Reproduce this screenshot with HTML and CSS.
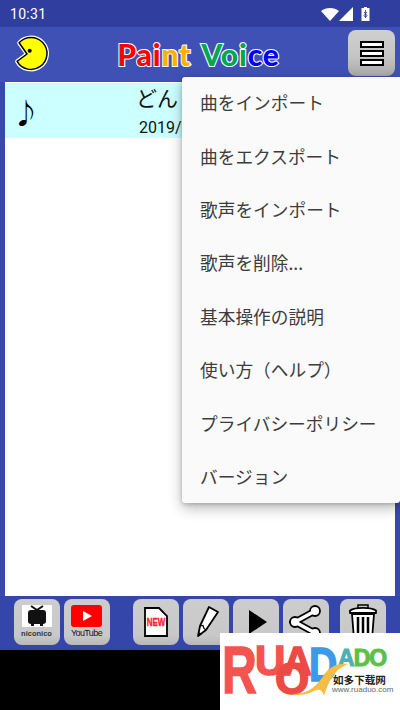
FILE: index.html
```html
<!DOCTYPE html>
<html lang="ja">
<head>
<meta charset="utf-8">
<title>Paint Voice</title>
<link rel="stylesheet" href="styles.css">
</head>
<body>
<div class="app">
  <header class="status">
    <span class="time">10:31</span>
    <span class="status-icons">
      <svg width="18" height="13" viewBox="0 0 18 13"><path d="M0 3C5-1 13-1 18 3L9 13Z" fill="#fff"/></svg>
      <svg width="14" height="14" viewBox="0 0 14 14"><path d="M14 0V14H0Z" fill="#fff"/></svg>
      <svg class="battery" width="9" height="14" viewBox="0 0 9 14"><path d="M3 0H6V1H8.500V14H.5V1H3Z" fill="#fff"/><path d="M4.500 3V11M3 5L6 8.500L4.500 10.500M6 5L3 8.500L4.500 10.500" stroke="#303f9f" stroke-width=".9" fill="none"/></svg>
    </span>
  </header>
  <div class="appbar">
    <svg class="pac" width="38" height="38" viewBox="0 0 38 38">
      <path d="M7.100 7.800A16 16 0 1 1 5.100 26.400L15 19Z" fill="#ffff00" stroke="#fff" stroke-width="4" stroke-linejoin="round"/>
      <path d="M7.100 7.800A16 16 0 1 1 5.100 26.400L15 19Z" fill="#ffff00" stroke="#000" stroke-width="1.500" stroke-linejoin="round"/>
      <circle cx="17.700" cy="15.700" r="2" fill="#000"/>
    </svg>
    <h1 class="title"><span class="red">Pai</span><span class="orange">nt</span> <span class="green">Voi</span><span class="blue">ce</span></h1>
    <button class="btn menu-btn" type="button" aria-label="メニュー">
      <span class="bar"></span><span class="bar"></span><span class="bar"></span>
    </button>
  </div>
  <main class="list">
    <div class="row">
      <span class="note">♪</span>
      <div class="row-text">
        <div class="song">どん</div>
        <div class="date">2019/01/01 1:00</div>
      </div>
    </div>
  </main>
  <footer class="toolbar">
    <div class="group">
      <button class="btn tool" type="button">
        <svg class="nico" width="30" height="22" viewBox="0 0 30 22"><rect width="30" height="22" rx="1" fill="#fff"/><path d="M9 1L15 5L21 1" stroke="#111" stroke-width="2" fill="none"/><rect x="6" y="5" width="18" height="14" rx="3" fill="#111"/><rect x="9" y="18" width="3" height="3" fill="#111"/><rect x="18" y="18" width="3" height="3" fill="#111"/></svg>
        <span class="tool-label nico-label">niconico</span>
      </button>
      <button class="btn tool" type="button">
        <svg width="31" height="22" viewBox="0 0 31 22"><rect width="31" height="22" rx="3" fill="#ff0000"/><path d="M12 6V16L21 11Z" fill="#fff"/></svg>
        <span class="tool-label">YouTube</span>
      </button>
    </div>
    <div class="group">
      <button class="btn tool" type="button">
        <span class="doc">
          <svg width="24" height="30" viewBox="0 0 24 30"><path d="M1 1H15L23 9V29H1Z" fill="#fff" stroke="#000" stroke-width="1.800"/></svg>
          <span class="new">NEW</span>
        </span>
      </button>
      <button class="btn tool" type="button">
        <svg width="34" height="34" viewBox="0 0 34 34"><path d="M20 2L29 7L17 25L9 31L11 21Z" fill="#fff" stroke="#000" stroke-width="1.800" stroke-linejoin="round"/><path d="M11 21L14 20.500L15 23.500L17 25" fill="none" stroke="#000" stroke-width="1.200"/><path d="M10.300 27.300L13 29L9 31.500Z" fill="#000"/></svg>
      </button>
      <button class="btn tool" type="button">
        <svg class="play" width="18" height="24" viewBox="0 0 18 24"><path d="M0 0V24L18 12Z" fill="#000"/></svg>
      </button>
      <button class="btn tool" type="button">
        <svg width="34" height="34" viewBox="0 0 34 34"><path d="M26 6L6 17L26 28" fill="none" stroke="#000" stroke-width="7"/><circle cx="26" cy="6" r="5" fill="#fff" stroke="#000" stroke-width="1.800"/><circle cx="6" cy="17" r="5" fill="#fff" stroke="#000" stroke-width="1.800"/><circle cx="26" cy="28" r="5" fill="#fff" stroke="#000" stroke-width="1.800"/><path d="M26 6L6 17L26 28" fill="none" stroke="#fff" stroke-width="3.500"/></svg>
      </button>
      <button class="btn tool trash" type="button">
        <svg width="28" height="36" viewBox="0 0 28 36"><path d="M9 4V1H19V4" fill="none" stroke="#000" stroke-width="1.500"/><path d="M1 9V6.500C6 3 22 3 27 6.500V9Z" fill="#fff" stroke="#000" stroke-width="1.800" stroke-linejoin="round"/><path d="M3 10H25L23 35H5Z" fill="#fff" stroke="#000" stroke-width="1.800" stroke-linejoin="round"/><path d="M9 13V32M14 13V32M19 13V32" stroke="#000" stroke-width="2.500"/></svg>
      </button>
    </div>
  </footer>
  <div class="black"></div>

  <nav class="menu">
    <a class="menu-item">曲をインポート</a>
    <a class="menu-item">曲をエクスポート</a>
    <a class="menu-item">歌声をインポート</a>
    <a class="menu-item">歌声を削除...</a>
    <a class="menu-item">基本操作の説明</a>
    <a class="menu-item">使い方（ヘルプ）</a>
    <a class="menu-item">プライバシーポリシー</a>
    <a class="menu-item">バージョン</a>
  </nav>

  <aside class="watermark">
    <span class="wm wm-r">R</span>
    <span class="wm wm-u">U</span>
    <span class="wm wm-a">A</span>
    <span class="wm wm-o">O</span>
    <span class="wm wm-d">D</span>
    <span class="wm wm-ado"><span class="wm-teal">A</span>DO</span>
    <svg class="wm-swoosh" width="56" height="34" viewBox="0 0 56 34"><path d="M0 31C16 31 24 24 32 12C38 3 46 0 56 1C44 6 38 14 32 33C30 26 26 26 22 28C14 32 6 33 0 31Z" fill="#f5bd45"/></svg>
    <span class="wm-cn">如多下载网</span>
    <span class="wm-url">www.ruaduo.com</span>
  </aside>
</div>
</body>
</html>
```

FILE: styles.css
```css
* { box-sizing: border-box; }
html, body { margin: 0; padding: 0; }
body { width: 400px; height: 710px; overflow: hidden; background: #000; font-family: "Roboto", "Noto Sans CJK JP", sans-serif; }

.app { position: relative; width: 400px; height: 710px; display: flex; flex-direction: column; overflow: hidden; background: #3949ab; }

.status { height: 27px; flex: none; background: #303f9f; color: #fff; display: flex; align-items: center; justify-content: space-between; padding: 1px 30px 0 10px; }
.time { font-size: 14px; letter-spacing: .3px; }
.status-icons { display: flex; align-items: center; gap: 0; }
.battery { margin-left: 8px; }

.appbar { height: 55px; flex: none; background: #3f51b5; display: flex; align-items: center; padding: 0 5px 0 12px; position: relative; }
.pac { flex: none; margin-top: -1px; }
.title { flex: 1; margin: -1px 0 0 -1px; text-align: center; font-family: "Lato", sans-serif; font-weight: 900; font-size: 30px; line-height: 34px; white-space: pre; letter-spacing: .9px; word-spacing: 3px; -webkit-text-stroke: 2.200px #fff; paint-order: stroke fill; }
.red { color: #f00; }
.orange { color: #ffb000; }
.green { color: #00a651; }
.blue { color: #0000f0; }

.btn { border: 0; padding: 0; margin: 0; width: 46px; height: 46px; border-radius: 8px; background: linear-gradient(#cdcdcd, #c8c8c8 80%, #b8b8b8); display: flex; flex-direction: column; align-items: center; justify-content: center; }
.menu-btn { flex: none; width: 47px; gap: 2px; margin-top: -3px; background: linear-gradient(#d0d0d0, #c4c4c4 60%, #a8a8a8); }
.bar { display: block; width: 24px; height: 7px; background: #fff; border: 2px solid #000; }

.list { flex: 1; min-height: 0; margin: 0 5px; background: #fff; padding-top: 1px; }
.row { height: 55px; background: #ccffff; display: flex; position: relative; }
.note { width: 42px; text-align: center; font-family: "Noto Sans CJK JP", sans-serif; font-size: 28px; line-height: 58px; color: #000; }
.row-text { flex: 1; text-align: center; padding: 1px 44px 0 0; color: #111; white-space: nowrap; }
.song { font-size: 21px; line-height: 30px; text-align: left; padding-left: 89px; }
.date { font-size: 16px; line-height: 24px; margin-top: 2px; }

.toolbar { height: 54px; flex: none; background: #3546ab; display: flex; justify-content: space-between; padding: 3px 14px 0 13.500px; }
.group { display: flex; gap: 4px; }
.group + .group { margin-left: 22px; }
.tool { color: #111; }
.trash { margin-left: 7px; }
.play { margin-left: 4px; }
.tool-label { font-size: 9px; line-height: 11px; letter-spacing: -.6px; margin-top: 1px; }
.nico-label { font-size: 7.500px; font-weight: 700; letter-spacing: 0; color: #333; }
.doc { position: relative; display: block; width: 24px; height: 30px; }
.new { position: absolute; left: -3px; right: -3px; top: 10px; text-align: center; color: #ff1a35; font-size: 11px; line-height: 11px; font-weight: 700; font-family: "Liberation Sans", sans-serif; transform: scaleX(.72); -webkit-text-stroke: .4px #ff1a35; }

.black { height: 60px; flex: none; background: #000; }

.menu { position: absolute; left: 182px; top: 77px; width: 218px; height: 426px; background: #fafafa; border-radius: 3px 0 3px 3px; box-shadow: 0 5px 14px rgba(0,0,0,.28), 0 1px 4px rgba(0,0,0,.2); display: flex; flex-direction: column; }
.menu-item { height: 53.400px; flex: none; display: flex; align-items: center; padding: 0 0 3px 18px; font-size: 17.700px; color: #3c3c3c; font-family: "Noto Sans CJK JP", sans-serif; white-space: nowrap; }

.watermark { position: absolute; left: 220px; top: 633px; width: 180px; height: 77px; background: #fff; overflow: hidden; font-family: "Liberation Sans", sans-serif; font-weight: 700; }
.wm { position: absolute; line-height: 1; color: #f4544f; white-space: nowrap; -webkit-text-stroke: 1.500px currentColor; }
.wm-r { left: 2px; top: 3px; font-size: 67px; transform: scaleX(.72); transform-origin: left; }
.wm-u { left: 35px; top: 6.500px; font-size: 42px; }
.wm-a { left: 63px; top: 8px; font-size: 40px; color: #ee4a45; }
.wm-o { left: 55px; top: 24px; font-size: 44px; color: #ee4a45; }
.wm-d { left: 89px; top: 6.500px; font-size: 49px; color: #3d9ae8; transform: scaleX(.8); transform-origin: left; }
.wm-ado { left: 118px; top: 14px; font-size: 23px; letter-spacing: -1px; color: #5cc04a; -webkit-text-stroke-width: 1px; }
.wm-teal { color: #4fb0b0; }
.wm-swoosh { position: absolute; left: 72px; top: 30px; }
.wm-cn { position: absolute; left: 113px; top: 40px; color: #222; font-size: 10.600px; line-height: 13px; font-family: "Noto Sans CJK SC", sans-serif; white-space: nowrap; }
.wm-url { position: absolute; left: 112px; top: 52px; color: #666; font-size: 8px; line-height: 9px; font-weight: 400; white-space: nowrap; }
```
